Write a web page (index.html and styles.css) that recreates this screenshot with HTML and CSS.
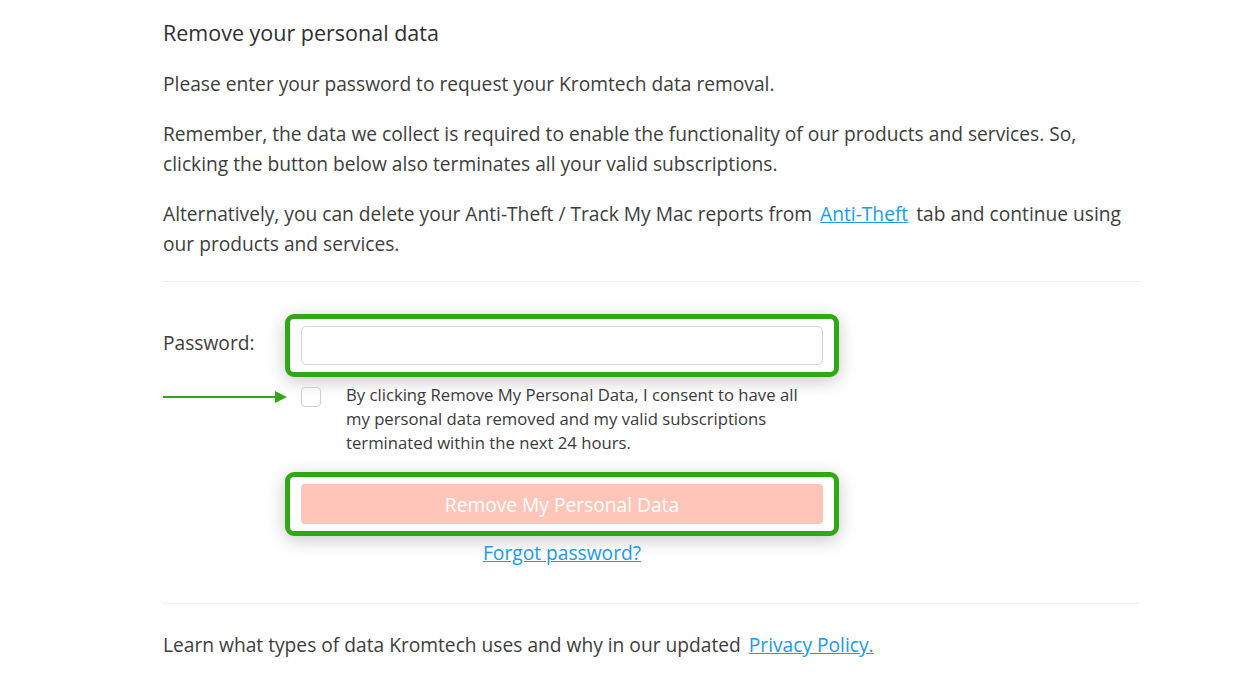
FILE: index.html
```html
<!DOCTYPE html>
<html>
<head>
    <title>Remove your personal data</title>
    <link rel="stylesheet" href="styles.css">
</head>
<body>
<div class="page">
    <h2 class="title">Remove your personal data</h2>
    <p>Please enter your password to request your Kromtech data removal.</p>
    <p>Remember, the data we collect is required to enable the functionality of our products and services. So, clicking the button below also terminates all your valid subscriptions.</p>
    <p>Alternatively, you can delete your Anti-Theft / Track My Mac reports from <a href="#">Anti-Theft</a> tab and continue using our products and services.</p>

    <div class="divider"></div>

    <div class="form">
        <div class="row">
            <label class="label" for="password">Password:</label>
            <div class="field">
                <div class="mark">
                    <input type="password" id="password" class="input">
                </div>
            </div>
        </div>

        <div class="row consent">
            <div class="label">
                <svg class="arrow" width="127" height="14" viewBox="0 0 127 14">
                    <line x1="0" y1="7" x2="114" y2="7" stroke="#2ea814" stroke-width="2"/>
                    <polygon points="112,1 124,7 112,13" fill="#2ea814"/>
                </svg>
            </div>
            <div class="field check-row">
                <span class="checkbox"></span>
                <span class="consent-text">By clicking Remove My Personal Data, I consent to have all my personal data removed and my valid subscriptions terminated within the next 24 hours.</span>
            </div>
        </div>

        <div class="row">
            <div class="label"></div>
            <div class="field">
                <div class="mark">
                    <button class="remove" disabled>Remove My Personal Data</button>
                </div>
                <a href="#" class="forgot">Forgot password?</a>
            </div>
        </div>
    </div>

    <div class="divider"></div>

    <p class="policy">Learn what types of data Kromtech uses and why in our updated <a href="#">Privacy Policy.</a></p>
</div>
</body>
</html>
```

FILE: styles.css
```css
body {
    margin: 0;
    background-color: #fff;
    font-family: "Open Sans", Arial, sans-serif;
    color: #3d3d3d;
}

.page {
    width: 977px;
    margin-left: 163px;
    padding-top: 18px;
}

.title {
    font-size: 21.5px;
    font-weight: 400;
    margin: 0 0 21px 0;
    color: #2f2f2f;
    line-height: 30px;
}

p {
    max-width: 965px;
    font-size: 19.2px;
    line-height: 30px;
    margin: 0 0 20px 0;
}

a {
    color: #1a9ae8;
    margin: 0 3px;
}

.divider {
    height: 1px;
    background-color: #eeeeee;
    margin-top: 22px;
}

.form {
    padding: 32px 0 13px 0;
}

.row {
    display: flex;
    align-items: flex-start;
}

.label {
    width: 138px;
    flex-shrink: 0;
    font-size: 19.2px;
    line-height: 30px;
    padding-top: 14px;
}

.field {
    width: 522px;
}

.mark {
    margin: 0 -16px;
    padding: 7px 11px;
    border: 5px solid #2ea814;
    border-radius: 9px;
    background-color: #fff;
    box-shadow: 0 4px 18px rgba(0, 0, 0, 0.22);
}

.input {
    display: block;
    box-sizing: border-box;
    width: 100%;
    height: 39px;
    border: 1px solid #d4d4d4;
    border-radius: 5px;
    font-size: 16px;
    outline: none;
}

.consent {
    margin-top: 10px;
}

.consent .label {
    padding-top: 3px;
    line-height: 14px;
}

.arrow {
    display: block;
}

.check-row {
    display: flex;
    align-items: flex-start;
}

.checkbox {
    width: 18px;
    height: 18px;
    border: 1px solid #cfcfcf;
    border-radius: 4px;
    flex-shrink: 0;
}

.consent-text {
    width: 465px;
    margin-left: 25px;
    font-size: 16.7px;
    line-height: 24px;
    margin-top: -4px;
    color: #3a3a3a;
}

.row + .row + .row {
    margin-top: 17px;
}

.row + .row + .row .label {
    padding: 0;
}

.remove {
    display: block;
    width: 100%;
    height: 40px;
    border: none;
    border-radius: 4px;
    background-color: #fec5b8;
    color: #fff;
    font-family: "Open Sans", Arial, sans-serif;
    font-size: 19.2px;
}

.forgot {
    display: block;
    text-align: center;
    font-size: 19.2px;
    line-height: 30px;
    margin-top: 2px;
}

.policy {
    margin-top: 26px;
}
```
